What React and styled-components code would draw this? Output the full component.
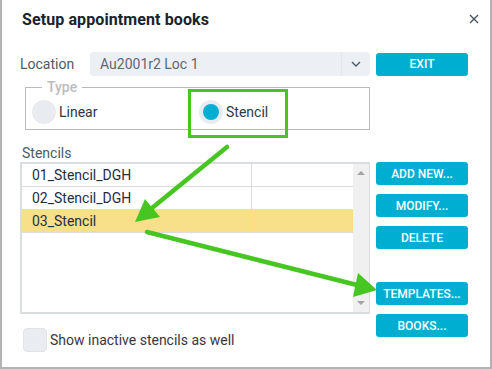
import styled, { createGlobalStyle } from "styled-components";

const GlobalStyle = createGlobalStyle`
  body {
    margin: 0;
    background: #ffffff;
    font-family: Roboto, "Liberation Sans", Arial, sans-serif;
  }
`;

// Dialog shell
const Dialog = styled.div`
  position: relative;
  box-sizing: border-box;
  width: 492px;
  height: 369px;
  background: #fff;
  border: 2px solid #b3b3b3;
  border-top: none;
  overflow: hidden;
`;

const Header = styled.div`
  display: flex;
  align-items: center;
  justify-content: space-between;
  height: 38px;
  padding: 0 8px 0 20px;
`;

const Title = styled.h1`
  margin: 0;
  font-size: 16px;
  font-weight: 700;
  color: #17232f;
  letter-spacing: 0.1px;
`;

const Close = styled.button`
  width: 16px;
  height: 16px;
  padding: 0;
  border: none;
  background: none;
  display: flex;
  align-items: center;
  justify-content: center;
`;

const Body = styled.div`
  display: flex;
  flex-direction: column;
  padding: 14px 0 0 18px;
`;

const Row = styled.div`
  display: flex;
  align-items: ${(p) => p.$align || "center"};
  gap: 6px;
`;

const Main = styled.div`
  width: 350px;
  display: flex;
  align-items: center;
`;

const Label = styled.span`
  font-size: 14px;
  line-height: 16px;
  color: #4b5a69;
  width: ${(p) => p.$width || "auto"};
`;

const Select = styled.div`
  flex: 1;
  height: 24px;
  display: flex;
  align-items: center;
  background: #eceff3;
  border-radius: 4px;
`;

const SelectText = styled.span`
  flex: 1;
  padding-left: 10px;
  font-size: 14px;
  color: #5d6873;
`;

const SelectArrow = styled.span`
  width: 28px;
  height: 24px;
  display: flex;
  align-items: center;
  justify-content: center;
  border-left: 1px solid #e4e8ec;
`;

const Button = styled.button`
  width: 92px;
  height: 23px;
  border: none;
  border-radius: 3px;
  background: #00aed2;
  color: #fff;
  font-family: inherit;
  font-size: 12px;
  font-weight: 500;
  padding: 0;
  margin-top: ${(p) => p.$gap || 0}px;
`;

const Fieldset = styled.fieldset`
  box-sizing: border-box;
  width: 345px;
  margin: 3px 0 0 5px;
  padding: 5px 0 5px 6px;
  border: 1px solid #b9b9b9;
  display: flex;
  align-items: center;
`;

const Legend = styled.legend`
  margin-left: 10px;
  padding: 0 5px;
  font-size: 14px;
  line-height: 16px;
  font-weight: 500;
  color: #bcbcbc;
`;

const RadioOption = styled.label`
  display: flex;
  align-items: center;
  gap: 3px;
  font-size: 14px;
  color: #2c3746;
  width: ${(p) => p.$width || "auto"};
`;

const RadioCircle = styled.span`
  box-sizing: border-box;
  width: 24px;
  height: 24px;
  border-radius: 50%;
  background: #e8ecf0;
  display: flex;
  align-items: center;
  justify-content: center;
  &::after {
    content: "";
    width: 16px;
    height: 16px;
    border-radius: 50%;
    background: ${(p) => (p.$checked ? "#00aed2" : "transparent")};
  }
`;

const SectionLabel = styled(Label)`
  margin: 15px 0 1px 2px;
`;

const List = styled.div`
  box-sizing: border-box;
  width: 350px;
  height: 152px;
  border: 2px solid #d9dde0;
  border-right-width: 1px;
  display: flex;
`;

const Rows = styled.div`
  flex: 1;
`;

const ListRow = styled.div`
  display: grid;
  grid-template-columns: 229px 1fr;
  height: 22px;
  border-bottom: 1px solid #dcdcdc;
  background: ${(p) => (p.$selected ? "#f8df8a" : "#fff")};
  font-size: 14px;
  color: #1f2e3f;
  & > span {
    display: flex;
    align-items: center;
    padding-left: 10px;
  }
  & > span + span {
    border-left: 1px solid #dcdcdc;
  }
`;

const Scrollbar = styled.div`
  width: 16px;
  background: #f0f0f0;
  display: flex;
  flex-direction: column;
  justify-content: space-between;
  align-items: center;
  padding: 7px 0;
`;

const Tri = styled.span`
  width: 0;
  height: 0;
  border-left: 4px solid transparent;
  border-right: 4px solid transparent;
  ${(p) =>
    p.$down
      ? "border-top: 4px solid #a3a3a3;"
      : "border-bottom: 4px solid #a3a3a3;"}
`;

const ButtonColumn = styled.div`
  display: flex;
  flex-direction: column;
`;

const CheckRow = styled.label`
  display: flex;
  align-items: center;
  gap: 3px;
  margin: -9px 0 0 3px;
  font-size: 14px;
  color: #3a3542;
`;

const CheckBox = styled.span`
  box-sizing: border-box;
  width: 24px;
  height: 24px;
  border-radius: 4px;
  background: #e9edf2;
  border: 1px solid #e0e4e9;
`;

const Overlay = styled.svg`
  position: absolute;
  left: 0;
  top: 0;
  pointer-events: none;
`;

const GREEN = "#46c523";

const stencils = [
  { name: "01_Stencil_DGH" },
  { name: "02_Stencil_DGH" },
  { name: "03_Stencil", selected: true },
];

const App = () => {
  return (
    <>
      <GlobalStyle />
      <Dialog>
        <Header>
          <Title>Setup appointment books</Title>
          <Close aria-label="close">
            <svg width="10" height="10" viewBox="0 0 10 10">
              <path d="M1 1L9 9M9 1L1 9" stroke="#3d4b59" strokeWidth="1.2" />
            </svg>
          </Close>
        </Header>

        <Body>
          <Row>
            <Main>
              <Label $width="70px">Location</Label>
              <Select>
                <SelectText>Au2001r2 Loc 1</SelectText>
                <SelectArrow>
                  <svg width="10" height="6" viewBox="0 0 10 6">
                    <path d="M1 1L5 5L9 1" fill="none" stroke="#4b5a69" strokeWidth="1.4" />
                  </svg>
                </SelectArrow>
              </Select>
            </Main>
            <Button>EXIT</Button>
          </Row>

          <Fieldset>
            <Legend>Type</Legend>
            <RadioOption $width="167px">
              <RadioCircle />
              Linear
            </RadioOption>
            <RadioOption>
              <RadioCircle $checked />
              Stencil
            </RadioOption>
          </Fieldset>

          <SectionLabel>Stencils</SectionLabel>

          <Row $align="flex-start">
            <List>
              <Rows>
                {stencils.map((s) => (
                  <ListRow key={s.name} $selected={s.selected}>
                    <span>{s.name}</span>
                    <span />
                  </ListRow>
                ))}
              </Rows>
              <Scrollbar>
                <Tri />
                <Tri $down />
              </Scrollbar>
            </List>
            <ButtonColumn>
              <Button>ADD NEW...</Button>
              <Button $gap={9}>MODIFY...</Button>
              <Button $gap={9}>DELETE</Button>
              <Button $gap={33}>TEMPLATES...</Button>
              <Button $gap={9}>BOOKS...</Button>
            </ButtonColumn>
          </Row>

          <CheckRow>
            <CheckBox />
            Show inactive stencils as well
          </CheckRow>
        </Body>

        {/* annotation arrows and highlight */}
        <Overlay width="492" height="369">
          <rect x="187.5" y="90.5" width="97" height="46" fill="none" stroke={GREEN} strokeWidth="3" />
          <line x1="225" y1="147" x2="150" y2="208" stroke={GREEN} strokeWidth="4.5" strokeLinecap="round" />
          <polygon points="133,222 143,199 158,217" fill={GREEN} />
          <line x1="145" y1="232" x2="355" y2="285" stroke={GREEN} strokeWidth="4.5" strokeLinecap="round" />
          <polygon points="375,290 356,273 351,297" fill={GREEN} />
        </Overlay>
      </Dialog>
    </>
  );
};

export default App;
